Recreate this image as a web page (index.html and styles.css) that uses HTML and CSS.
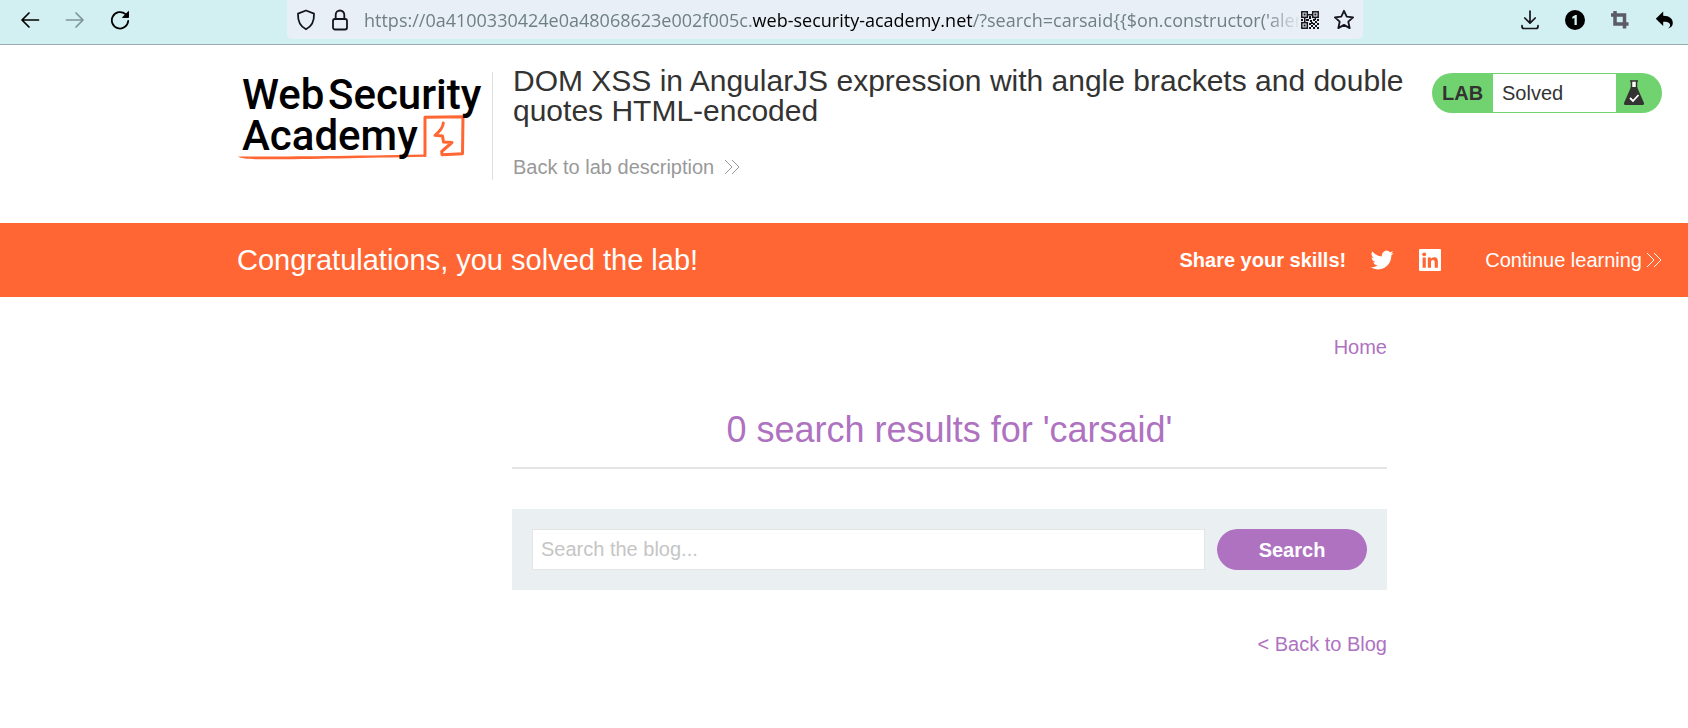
FILE: index.html
```html
<!DOCTYPE html>
<html lang="en">
<head>
<meta charset="utf-8">
<title>DOM XSS in AngularJS expression with angle brackets and double quotes HTML-encoded</title>
<link rel="stylesheet" href="styles.css">
</head>
<body>
<div class="toolbar">
  <div class="nav-buttons">
    <button class="icon-button" type="button" aria-label="Back">
      <svg width="20" height="20" viewBox="0 0 20 20" fill="none" stroke="#000" stroke-width="1.7" stroke-linecap="round" stroke-linejoin="round"><path d="M18.5 10H2M9 3L2 10l7 7"/></svg>
    </button>
    <button class="icon-button" type="button" aria-label="Forward">
      <svg width="20" height="20" viewBox="0 0 20 20" fill="none" stroke="#7f9599" stroke-width="1.7" stroke-linecap="round" stroke-linejoin="round"><path d="M1.500 10H18M11 3l7 7-7 7"/></svg>
    </button>
    <button class="icon-button" type="button" aria-label="Reload">
      <svg width="20" height="20" viewBox="0 0 20 20" fill="none" stroke="#000" stroke-width="1.8" stroke-linecap="round"><path d="M18.200 11A8.200 8.200 0 1 1 15.500 4.200"/><path d="M18.500 1.800v5.600h-5.600z" fill="#000" stroke-width="1" stroke-linejoin="round"/></svg>
    </button>
  </div>
  <div class="address">
    <svg class="address-icon" width="20" height="22" viewBox="0 0 20 22" fill="none" stroke="#15141a" stroke-width="1.8" stroke-linejoin="round"><path d="M10 1.500L18 4.600C18.300 11.500 15.500 17.500 10 20.300C4.500 17.500 1.700 11.500 2 4.600z"/></svg>
    <svg class="address-icon" width="18" height="22" viewBox="0 0 18 22" fill="none" stroke="#15141a" stroke-width="1.8"><rect x="2" y="10" width="14" height="10.500" rx="2"/><path d="M4.700 10V5.800a4.300 4.300 0 0 1 8.600 0V10"/></svg>
    <div class="url">https://0a4100330424e0a48068623e002f005c.<span class="url-domain">web-security-academy.net</span>/?search=carsaid{{$on.constructor('alert</div>
    <button class="icon-button" type="button" aria-label="QR code">
      <svg width="18" height="18" viewBox="0 0 18 18"><g fill="none" stroke="#15141a" stroke-width="1.500"><rect x=".8" y=".8" width="5.500" height="5.500"/><rect x="11.700" y=".8" width="5.500" height="5.500"/><rect x=".8" y="11.700" width="5.500" height="5.500"/></g><path fill="#15141a" d="M2.600 2.600h2v2h-2zM13.400 2.600h2v2h-2zM2.600 13.400h2v2h-2zM6 3h6v1.500H6zM8 5h2v3H8zM0 8h2v2H0zM3 6h1.500v6H3zM5 8h3v2H5zM9 9h2v2H9zM13.500 6H15v3h-1.500zM12 8h2v2h-2zM16 8h2v2h-2zM10 11h2v2h-2zM14 10h2v2h-2zM8 12h2v2H8zM12 12h2v2h-2zM16 12h2v2h-2zM10 14h2v2h-2zM14 14h2v2h-2zM8 16h2v2H8zM12 16h2v2h-2zM16 16h2v2h-2z"/></svg>
    </button>
    <button class="icon-button bookmark" type="button" aria-label="Bookmark this page">
      <svg width="22" height="22" viewBox="0 0 22 22" fill="none" stroke="#15141a" stroke-width="1.800" stroke-linejoin="round"><path d="M11 1.800l2.700 5.900 6.400.7-4.800 4.300 1.400 6.400L11 15.900l-5.700 3.200 1.400-6.400L1.900 8.400l6.400-.7z"/></svg>
    </button>
  </div>
  <div class="tools">
    <button class="icon-button" type="button" aria-label="Downloads">
      <svg width="20" height="20" viewBox="0 0 20 20" fill="none" stroke="#15141a" stroke-width="1.700" stroke-linecap="round" stroke-linejoin="round"><path d="M10 1v12M4.800 8L10 13.200 15.200 8M2 15.500v1a2 2 0 0 0 2 2h12a2 2 0 0 0 2-2v-1"/></svg>
    </button>
    <button class="icon-button" type="button" aria-label="Profile 1">
      <svg width="20" height="20" viewBox="0 0 20 20"><circle cx="10" cy="10" r="10"/><path d="M7.300 6.800L10.300 5h1.500v10H9.500V7.900l-2.200.9z" fill="#d2eff2"/></svg>
    </button>
    <button class="icon-button" type="button" aria-label="Crop">
      <svg width="20" height="20" viewBox="0 0 20 20" fill="none" stroke="#5b5b66" stroke-width="3.500"><path d="M5 1v13h13.500M1 5h13.500v13.500"/></svg>
    </button>
    <button class="icon-button" type="button" aria-label="Undo">
      <svg width="20" height="20" viewBox="0 0 20 20"><path d="M8.200 1.500v4.300c6.500 0 9.800 3.200 9.600 7.500-.1 2.800-2 4.700-5 5.200 2.200-1.300 2.800-3 2.100-4.500-.8-1.700-3.200-2.300-6.700-2.200V16L.8 8.800z"/></svg>
    </button>
  </div>
</div>

<header class="lab-header">
  <a class="logo" href="#" aria-label="Web Security Academy">
    <svg width="255" height="108" viewBox="0 0 255 108">
      <path d="M188 83.500V45.300L226 44.800 225.500 81.700 205 82.700 204.700 79.500 215 70.500 206.500 70 205.500 64 198 63.300C202 60 206 56 206.300 51" fill="none" stroke="#ff6633" stroke-width="3" stroke-linejoin="round" stroke-linecap="round"/>
      <path fill="#ff6633" d="M1 84.600C50 84.500 100 84 189 82.400v2.400C120 86 70 87.500 20 87.300 10 87 4 86.500 1 84.600z"/>
      <g class="logo-text"><text x="5" y="37">Web</text><text x="91" y="37">Security</text><text x="5" y="78">Academy</text></g>
    </svg>
  </a>
  <div class="lab-title">
    <h2>DOM XSS in AngularJS expression with angle brackets and double quotes HTML-encoded</h2>
    <a class="back-link" href="#">Back to lab description
      <svg width="16" height="16" viewBox="0 0 16 16" fill="none" stroke="currentColor"><path d="M1 1l7 7-7 7M8 1l7 7-7 7"/></svg>
    </a>
  </div>
  <div class="lab-status">
    <span class="lab-label">LAB</span>
    <span class="lab-state">Solved</span>
    <svg class="flask" width="20" height="26" viewBox="0 0 20 26"><path d="M6 1h8M7.500 1v7h5V1" fill="#fff" stroke="#333332" stroke-width="1.500"/><path d="M7 7h6l7 16q.5 2-1.500 2h-17Q-.5 25 0 23z" fill="#333332"/><path d="M6 18l3 3 5.500-6" fill="none" stroke="#fff" stroke-width="1.800"/></svg>
  </div>
</header>

<section class="banner">
  <h4>Congratulations, you solved the lab!</h4>
  <strong class="share">Share your skills!</strong>
  <a class="social" href="#" aria-label="Share on Twitter">
    <svg width="24" height="24" viewBox="0 0 24 24" fill="#fff"><path d="M23.640 4.940a9.400 9.400 0 0 1-2.700.74 4.700 4.700 0 0 0 2.070-2.600 9.400 9.400 0 0 1-2.990 1.140 4.710 4.710 0 0 0-8.020 4.290A13.360 13.360 0 0 1 2.300 3.590a4.700 4.700 0 0 0 1.460 6.280 4.700 4.700 0 0 1-2.130-.59v.06a4.710 4.710 0 0 0 3.780 4.620 4.700 4.700 0 0 1-2.130.08 4.710 4.710 0 0 0 4.400 3.270A9.440 9.440 0 0 1 .7 19.260a13.320 13.320 0 0 0 7.220 2.120c8.660 0 13.400-7.180 13.400-13.400l-.02-.61a9.600 9.600 0 0 0 2.340-2.430z"/></svg>
  </a>
  <a class="social" href="#" aria-label="Share on LinkedIn">
    <svg width="24" height="24" viewBox="0 0 24 24"><rect x="1" y="1" width="22" height="22" rx="1" fill="#fff"/><circle cx="6.200" cy="6.300" r="1.900" fill="#f63"/><path d="M4.600 9.500h3.200v10.300H4.600zM9.800 9.500h3.100v1.400c.5-.9 1.600-1.700 3.200-1.700 3.100 0 3.800 2 3.800 4.900v5.700h-3.200v-5.100c0-1.400-.2-2.700-1.800-2.700S13 13.200 13 14.700v5.100H9.800z" fill="#f63"/></svg>
  </a>
  <a class="continue" href="#">Continue learning
    <svg width="16" height="16" viewBox="0 0 16 16" fill="none" stroke="currentColor"><path d="M1 1l7 7-7 7M8 1l7 7-7 7"/></svg>
  </a>
</section>

<main class="content">
  <nav class="top-links"><a href="#">Home</a></nav>
  <h1>0 search results for 'carsaid'</h1>
  <form class="search">
    <input type="text" placeholder="Search the blog..." aria-label="Search the blog">
    <button type="button">Search</button>
  </form>
  <div class="blog-link"><a href="#">&lt; Back to Blog</a></div>
</main>
</body>
</html>
```
FILE: styles.css
```css
* { box-sizing: border-box; }

body {
  margin: 0;
  background: #fff;
  color: #333332;
  font: 20px/24px "Liberation Sans", Arial, sans-serif;
}

a { color: inherit; text-decoration: none; }
h1, h2, h4 { margin: 0; font-weight: 400; }
svg { display: block; flex: none; }

.toolbar {
  display: flex;
  height: 45px;
  padding: 0 13px 5px 20px;
  background: #d2eff2;
  border-bottom: 1px solid #9aacae;
}

.icon-button {
  display: flex;
  padding: 0;
  border: 0;
  background: none;
}

.nav-buttons, .tools { display: flex; align-items: center; gap: 25px; }

.address {
  display: flex;
  align-items: center;
  flex: 1;
  min-width: 0;
  margin: 0 157px 0 157px;
  padding: 0 8px 0 9px;
  border-radius: 0 0 5px 5px;
  background: #e8eff6;
}

.address-icon { margin-right: 15px; }
.bookmark { margin-left: 14px; }

.url {
  flex: 1;
  min-width: 0;
  overflow: hidden;
  white-space: nowrap;
  color: #6f8084;
  font: 18px/38px "Open Sans", "Noto Sans", sans-serif;
  -webkit-mask-image: linear-gradient(to left, transparent, #000 36px);
  mask-image: linear-gradient(to left, transparent, #000 36px);
}

.url-domain { color: #000; }

.lab-header {
  display: flex;
  align-items: flex-start;
  min-height: 178px;
  padding: 21px 26px 0 237px;
}

.logo {
  margin-top: 6px;
  border-right: 1px solid #dedede;
}

.logo-text {
  font: 500 42px Roboto, sans-serif;
  fill: #000;
}

.lab-title { flex: 1; padding: 0 14px 0 20px; }
.lab-title h2 { font-size: 30px; line-height: 30px; }

.back-link {
  display: inline-flex;
  align-items: center;
  gap: 10px;
  margin-top: 29px;
  color: #999;
}

.lab-status {
  display: flex;
  align-items: center;
  width: 230px;
  height: 40px;
  margin-top: 7px;
  padding: 1px 18px 1px 10px;
  border-radius: 20px;
  background: #70d36f;
}

.lab-label { width: 51px; font-weight: 700; }
.lab-state { flex: 1; padding-left: 9px; background: #fff; line-height: 38px; }
.flask { margin-left: 8px; }

.banner {
  display: flex;
  align-items: center;
  min-height: 74px;
  padding: 0 26px 0 237px;
  background: #ff6633;
  color: #fff;
}

.banner h4 { flex: 1; font-size: 29px; line-height: 32px; }
.social { margin-left: 24px; }
.continue { display: flex; align-items: center; gap: 4px; margin-left: 43px; }

.content { width: 875px; max-width: calc(100% - 512px); margin-left: 512px; color: #ae72c1; }
.top-links { padding-top: 38px; text-align: right; }

.content h1 {
  padding: 50px 0 17px;
  border-bottom: 2px solid #e5e5e5;
  font-size: 36px;
  line-height: 41px;
  text-align: center;
}

.search {
  display: flex;
  gap: 12px;
  margin: 40px 0 42px;
  padding: 20px;
  background: #eaeff2;
}

.search input {
  flex: 1;
  min-width: 0;
  height: 41px;
  padding: 0 8px;
  border: 1px solid #e5e5e5;
  border-radius: 0;
  font: inherit;
}

.search input::placeholder { color: #c5c5c5; }

.search button {
  width: 150px;
  border: 0;
  border-radius: 21px;
  background: #ae72c1;
  color: #fff;
  font: inherit;
  font-weight: 700;
}

.blog-link { text-align: right; }
```
